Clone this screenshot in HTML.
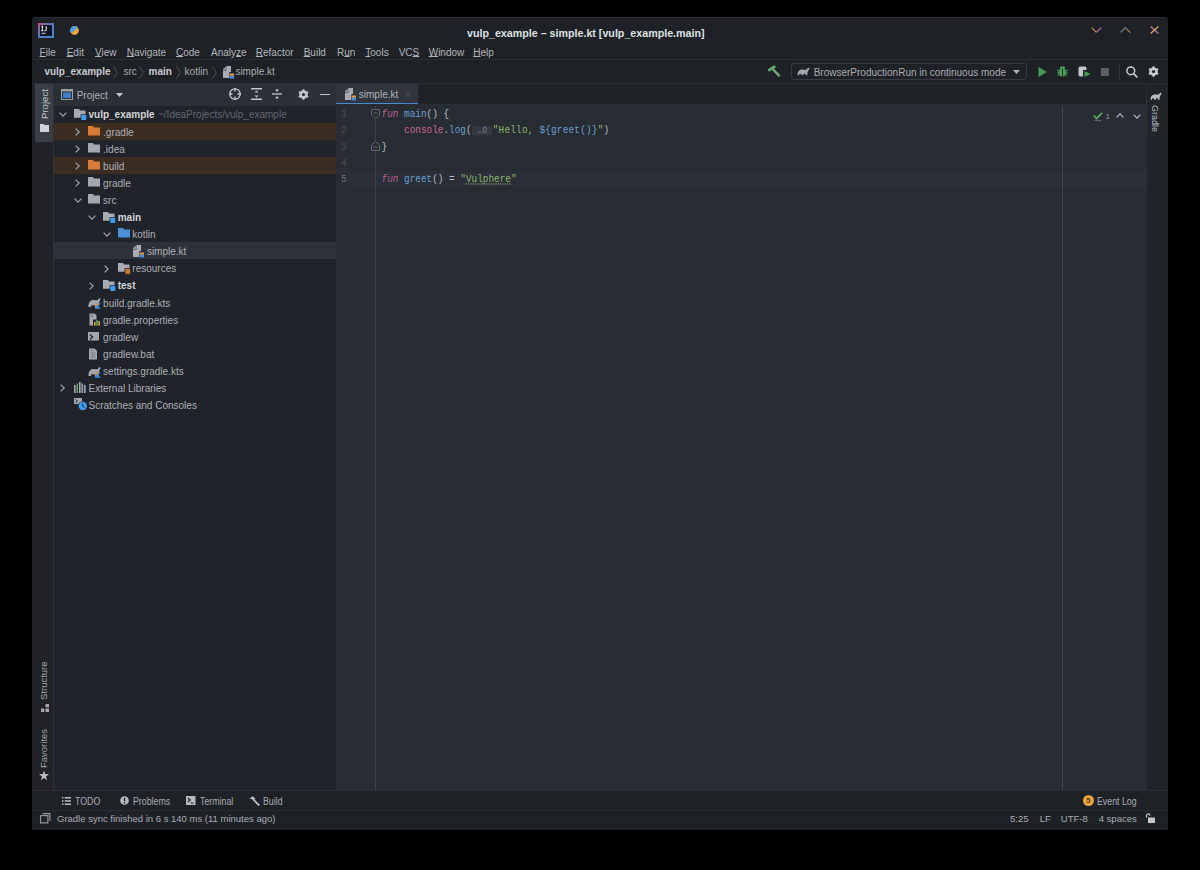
<!DOCTYPE html>
<html><head><meta charset="utf-8">
<style>
html,body{margin:0;padding:0;width:1200px;height:870px;overflow:hidden;background:#000;}
body{position:relative;font-family:"Liberation Sans",sans-serif;font-size:10px;color:#bcbec4;}
.a{position:absolute;}
.t{position:absolute;white-space:nowrap;line-height:12px;}
#win{position:absolute;left:32px;top:17px;width:1136px;height:813px;background:#1e2126;border-radius:4px 4px 0 0;box-shadow:inset 0 1px 0 #2a2d33;overflow:hidden;}
.u{text-decoration:underline;text-underline-offset:0.4px;text-decoration-thickness:1px;}
.mono{position:absolute;white-space:pre;font-family:"Liberation Mono",monospace;font-size:9.4px;line-height:16px;color:#b8bcc2;}
svg{position:absolute;overflow:visible;}
.menu{color:#b3b5ba;top:46.8px;}
.bc{top:66.4px;color:#a9acb1;}
.tr{color:#adb0b5;}
.b{font-weight:bold;color:#d2d4d8;}
</style></head>
<body>
<div id="win"></div>

<!-- ============ TITLE BAR ============ -->
<svg style="left:38px;top:23px" width="16" height="15" viewBox="0 0 16 15">
 <defs><linearGradient id="ijg" x1="0" y1="0" x2="1" y2="1"><stop offset="0" stop-color="#c8457a"/><stop offset="0.4" stop-color="#5a78c0"/><stop offset="1" stop-color="#4a86c8"/></linearGradient></defs>
 <rect x="0" y="0" width="16" height="15" fill="url(#ijg)"/>
 <rect x="2" y="2" width="12" height="11" fill="#0f1422"/>
 <path d="M3.3 3.3 H5.3 M4.3 3.3 V7.6 M3.3 7.6 H5.3 M8.2 3.3 V6.8 Q8.2 7.7 7.2 7.7 H6.3" stroke="#ececec" stroke-width="1.1" fill="none"/>
 <rect x="3.5" y="9.8" width="4" height="1" fill="#d0d0d0"/>
</svg>
<svg style="left:70.3px;top:25.5px" width="9" height="9" viewBox="0 0 9 9">
 <circle cx="4.5" cy="4.5" r="4.4" fill="#eea53a"/>
 <path d="M1.39 7.61 A4.4 4.4 0 0 1 7.61 1.39 Z" fill="#4b9fe2"/>
</svg>
<div class="t" id="title" style="left:467px;top:26.9px;font-weight:bold;font-size:10.7px;color:#dfe1e5;">vulp_example – simple.kt [vulp_example.main]</div>
<!-- window controls -->
<svg style="left:1091px;top:27px" width="11" height="6" viewBox="0 0 11 6"><path d="M0.6 0.6 L5.3 5.3" stroke="#c88a55" stroke-width="1.2" fill="none"/><path d="M5.3 5.3 L10.4 0.6" stroke="#c06fa8" stroke-width="1.2" fill="none"/></svg>
<svg style="left:1120px;top:26.5px" width="11" height="6" viewBox="0 0 11 6"><path d="M0.6 5.4 L5.3 0.7 L8 3.4" stroke="#7d8087" stroke-width="1.2" fill="none"/><path d="M8 3.4 L10.4 5.6" stroke="#c88a55" stroke-width="1.2" fill="none"/></svg>
<svg style="left:1149.5px;top:26px" width="9" height="8" viewBox="0 0 9 8"><path d="M0.6 0.6 L8.4 7.6" stroke="#c07aa0" stroke-width="1.3" fill="none"/><path d="M8.4 0.6 L0.6 7.6" stroke="#e3a76a" stroke-width="1.3" fill="none"/></svg>

<!-- ============ MENU ============ -->
<div class="t menu" style="left:39.6px"><span class="u">F</span>ile</div>
<div class="t menu" style="left:66.7px"><span class="u">E</span>dit</div>
<div class="t menu" style="left:95px"><span class="u">V</span>iew</div>
<div class="t menu" style="left:126.7px"><span class="u">N</span>avigate</div>
<div class="t menu" style="left:176px"><span class="u">C</span>ode</div>
<div class="t menu" style="left:211px">Analy<span class="u">z</span>e</div>
<div class="t menu" style="left:255.8px"><span class="u">R</span>efactor</div>
<div class="t menu" style="left:303.7px"><span class="u">B</span>uild</div>
<div class="t menu" style="left:337px">R<span class="u">u</span>n</div>
<div class="t menu" style="left:365.3px"><span class="u">T</span>ools</div>
<div class="t menu" style="left:398.7px">VC<span class="u">S</span></div>
<div class="t menu" style="left:428.7px"><span class="u">W</span>indow</div>
<div class="t menu" style="left:473.3px"><span class="u">H</span>elp</div>

<!-- separators -->
<div class="a" style="left:32px;top:59px;width:1136px;height:1px;background:#2a2d33;"></div>
<div class="a" style="left:32px;top:83px;width:1136px;height:1px;background:#2a2d33;"></div>

<!-- ============ NAVBAR ============ -->
<div class="t bc b" style="left:44.4px;color:#c9cbcf">vulp_example</div>
<svg style="left:113px;top:66px" width="5" height="13" viewBox="0 0 5 13"><path d="M0.5 0.5 L4.3 6.5 L0.5 12.5" stroke="#4d5057" stroke-width="1" fill="none"/></svg>
<div class="t bc" style="left:123.5px">src</div>
<svg style="left:139px;top:66px" width="5" height="13" viewBox="0 0 5 13"><path d="M0.5 0.5 L4.3 6.5 L0.5 12.5" stroke="#4d5057" stroke-width="1" fill="none"/></svg>
<div class="t bc b" style="left:148.5px;color:#c9cbcf">main</div>
<svg style="left:175.5px;top:66px" width="5" height="13" viewBox="0 0 5 13"><path d="M0.5 0.5 L4.3 6.5 L0.5 12.5" stroke="#4d5057" stroke-width="1" fill="none"/></svg>
<div class="t bc" style="left:184.6px">kotlin</div>
<svg style="left:212px;top:66px" width="5" height="13" viewBox="0 0 5 13"><path d="M0.5 0.5 L4.3 6.5 L0.5 12.5" stroke="#4d5057" stroke-width="1" fill="none"/></svg>
<svg style="left:221.5px;top:65px" width="12" height="14" viewBox="0 0 12 14"><path d="M4.5 1 H9 V7 H4.5 Z" fill="#a9adb3"/><path d="M1 5 H4.5 L4.5 1 L1 4 Z" fill="#8f939a"/><path d="M1 5.5 H7.5 V13 H1 Z" fill="#a9adb3"/><rect x="7" y="8" width="5.5" height="6" fill="#283040"/><path d="M7.5 8.5 H12 V10.8 H7.5 Z" fill="#e49a4a"/><path d="M7.5 10.8 H12 V13.5 H7.5 Z" fill="#4a8fd8"/></svg>
<div class="t bc" style="left:235.4px">simple.kt</div>

<!-- ============ RIGHT TOOLBAR ============ -->
<svg style="left:767px;top:65px" width="14" height="12" viewBox="0 0 14 12"><path d="M1.2 5.6 L8.2 1.2" stroke="#62a86a" stroke-width="2.8" fill="none"/><path d="M5.2 3.6 L12.6 11.2" stroke="#6fa777" stroke-width="2.4" fill="none"/></svg>
<div class="a" style="left:790.5px;top:63px;width:234px;height:15px;border:1px solid #393c43;border-radius:3px;"></div>
<svg style="left:797px;top:66.5px" width="13" height="9" viewBox="0 0 13.5 9"><path d="M0.6 8.5 C0.4 5 2 2.6 5 2.4 C7 2.3 8.2 3 9.3 2.6 C10.3 2.2 10.8 1 11.6 0.6 C12.6 0.2 13.2 1 12.8 2 C12.3 3.2 11.3 4.3 10.8 6 L10.8 8.5 L9.2 8.5 L8.8 6.8 L6.8 7.1 L6.4 8.5 L4.8 8.5 L4.5 7.1 L2.6 6.8 L2.2 8.5 Z" fill="#a4a8ae"/></svg>
<div class="t" style="left:813.7px;top:67.3px;color:#a9acb1">BrowserProductionRun in continuous mode</div>
<svg style="left:1012.5px;top:70px" width="7" height="4" viewBox="0 0 7 4"><path d="M0 0 H7 L3.5 4 Z" fill="#b0b3b8"/></svg>
<svg style="left:1038px;top:66.8px" width="9" height="10" viewBox="0 0 9 10"><path d="M0.5 0 L8.8 5 L0.5 10 Z" fill="#499c54"/></svg>
<svg style="left:1057px;top:66px" width="11" height="11" viewBox="0 0 11 11"><ellipse cx="5.5" cy="6.5" rx="4" ry="4.3" fill="#499c54"/><rect x="3" y="0.5" width="5" height="2.5" rx="1" fill="#499c54"/><path d="M0 4 L2 5 M11 4 L9 5 M0 7 H2 M11 7 H9 M0.5 10 L2 9 M10.5 10 L9 9" stroke="#499c54" stroke-width="1"/><path d="M5.5 3 V11" stroke="#1e2025" stroke-width="0.8"/></svg>
<svg style="left:1078px;top:66px" width="13" height="11" viewBox="0 0 13 11"><path d="M5 0.5 H2 C1 0.5 0.5 1.5 0.5 2.5 V8.5 C0.5 9.5 1 10.5 2 10.5 H5 Z" fill="#c4c7cc"/><path d="M5 0.5 H7 C8 0.5 8.5 1.5 8.5 2.5 V4 H5 Z" fill="#c4c7cc"/><path d="M6.5 5 L12.5 8 L6.5 11 Z" fill="#499c54"/></svg>
<div class="a" style="left:1101px;top:67.6px;width:8px;height:8.3px;background:#5a5d62;"></div>
<div class="a" style="left:1118.5px;top:64px;width:1px;height:16px;background:#2f3238;"></div>
<svg style="left:1126px;top:65.5px" width="12" height="12" viewBox="0 0 12 12"><circle cx="4.8" cy="4.8" r="3.9" stroke="#c7cacf" stroke-width="1.5" fill="none"/><path d="M7.6 7.6 L11.3 11.3" stroke="#c7cacf" stroke-width="1.7"/></svg>
<svg class="gear" style="left:1147.5px;top:66px" width="11" height="11" viewBox="0 0 12 12"><path d="M4.78 1.46 L5.14 0.16 L6.86 0.16 L7.22 1.46 L9.32 2.68 L10.62 2.34 L11.49 3.83 L10.54 4.78 L10.54 7.22 L11.49 8.17 L10.62 9.66 L9.32 9.32 L7.22 10.54 L6.86 11.84 L5.14 11.84 L4.78 10.54 L2.68 9.32 L1.38 9.66 L0.51 8.17 L1.46 7.22 L1.46 4.78 L0.51 3.83 L1.38 2.34 L2.68 2.68 Z" fill="#c7cacf"/><circle cx="6" cy="6" r="1.7" fill="#1e2126"/></svg>

<!-- ============ LEFT STRIP ============ -->
<div class="a" style="left:32px;top:84px;width:21px;height:706px;background:#202227;"></div>
<div class="a" style="left:53px;top:84px;width:1px;height:706px;background:#2f3237;"></div>
<div class="a" style="left:35px;top:83.5px;width:18px;height:58px;background:#3a3e45;"></div>
<div class="t" style="left:38.6px;top:119px;transform:rotate(-90deg);transform-origin:0 0;color:#c3c6cb;font-size:9.6px">Project</div>
<svg style="left:39.8px;top:124.2px" width="9" height="8" viewBox="0 0 9 8"><path d="M0 0 H3.5 L4.5 1 H9 V8 H0 Z" fill="#d0d3d8"/></svg>
<div class="t" style="left:38.2px;top:700px;transform:rotate(-90deg);transform-origin:0 0;color:#a3a6ab;font-size:9.5px">Structure</div>
<svg style="left:40.5px;top:704px" width="8" height="8" viewBox="0 0 8 8"><rect x="0" y="4.5" width="3.3" height="3.5" fill="#a3a6ab"/><rect x="4.5" y="4.5" width="3.5" height="3.5" fill="#a3a6ab"/><rect x="4.5" y="0" width="3.5" height="3.3" fill="#a3a6ab"/></svg>
<div class="t" style="left:38.2px;top:768px;transform:rotate(-90deg);transform-origin:0 0;color:#a3a6ab;font-size:9.5px">Favorites</div>
<svg style="left:39.3px;top:770px" width="10" height="11" viewBox="0 0 10 10"><path d="M5 0 L6.2 3.6 L10 3.7 L7 6 L8.1 9.8 L5 7.6 L1.9 9.8 L3 6 L0 3.7 L3.8 3.6 Z" fill="#b8bbc0"/></svg>

<!-- ============ PROJECT PANEL ============ -->
<div class="a" style="left:54px;top:84px;width:282px;height:22px;background:#2b2f36;"></div>
<div class="a" style="left:54px;top:106px;width:282px;height:684px;background:#20232a;"></div>
<svg style="left:60.8px;top:89px" width="12" height="11" viewBox="0 0 12 11"><rect x="0.5" y="0.5" width="11" height="10" fill="none" stroke="#9da1a7" stroke-width="1"/><rect x="0.5" y="0.5" width="11" height="2" fill="#9da1a7"/><rect x="2" y="3.5" width="8" height="5.5" fill="#3f7fc7"/></svg>
<div class="t" style="left:76.7px;top:90px;color:#aeb1b6">Project</div>
<svg style="left:116px;top:93.3px" width="7" height="4" viewBox="0 0 7 4"><path d="M0 0 H7 L3.5 4 Z" fill="#c3c6cb"/></svg>
<!-- header icons -->
<svg style="left:228.5px;top:88px" width="12" height="12" viewBox="0 0 12 12"><circle cx="6" cy="6" r="5.2" stroke="#c3c6cb" stroke-width="1.3" fill="none"/><path d="M6 0 V3.5 M6 8.5 V12 M0 6 H3.5 M8.5 6 H12" stroke="#c3c6cb" stroke-width="1.3"/></svg>
<svg style="left:250.5px;top:88px" width="11" height="12" viewBox="0 0 11 12"><path d="M0 0.8 H11 M0 11.2 H11" stroke="#c3c6cb" stroke-width="1.6"/><path d="M3.5 4.5 L5.5 2.5 L7.5 4.5 Z M3.5 7.5 L5.5 9.5 L7.5 7.5 Z" fill="#c3c6cb"/></svg>
<svg style="left:272px;top:89px" width="10" height="10" viewBox="0 0 10 10"><path d="M0 5 H10" stroke="#c3c6cb" stroke-width="1.3"/><path d="M3 0.5 L5 3 L7 0.5 Z M3 9.5 L5 7 L7 9.5 Z" fill="#c3c6cb"/></svg>
<svg class="gear" style="left:297.5px;top:88.5px" width="11" height="11" viewBox="0 0 12 12"><path d="M4.78 1.46 L5.14 0.16 L6.86 0.16 L7.22 1.46 L9.32 2.68 L10.62 2.34 L11.49 3.83 L10.54 4.78 L10.54 7.22 L11.49 8.17 L10.62 9.66 L9.32 9.32 L7.22 10.54 L6.86 11.84 L5.14 11.84 L4.78 10.54 L2.68 9.32 L1.38 9.66 L0.51 8.17 L1.46 7.22 L1.46 4.78 L0.51 3.83 L1.38 2.34 L2.68 2.68 Z" fill="#c3c6cb"/><circle cx="6" cy="6" r="1.7" fill="#2b2f36"/></svg>
<div class="a" style="left:320px;top:93.5px;width:10px;height:1.5px;background:#c3c6cb;"></div>

<svg style="left:59.0px;top:112.2px" width="8" height="5" viewBox="0 0 8 5"><path d="M0.6 0.6 L4 4.2 L7.4 0.6" stroke="#a2a5aa" stroke-width="1.2" fill="none"/></svg>
<svg style="left:73.8px;top:109.0px" width="13" height="12" viewBox="0 0 13 12"><path d="M0 0 H5 L6 1.5 H11.5 V8.7 H0 Z" fill="#a8acb2"/><rect x="6.6" y="5.2" width="6" height="6" fill="#20232a"/><rect x="7.3" y="5.8" width="5" height="5.2" fill="#3d9bf0"/></svg>
<div class="t b" style="left:88.5px;top:109.4px">vulp_example</div>
<div class="t" style="left:158px;top:109.4px;color:#62666d">~/IdeaProjects/vulp_example</div>
<div class="a" style="left:54px;top:122.7px;width:282px;height:17.1px;background:#3c2d22"></div>
<svg style="left:74.8px;top:127.9px" width="5" height="8" viewBox="0 0 5 8"><path d="M0.6 0.6 L4.2 4 L0.6 7.4" stroke="#a2a5aa" stroke-width="1.2" fill="none"/></svg>
<svg style="left:88.4px;top:125.5px" width="12" height="10" viewBox="0 0 12 10"><path d="M0 0 H5 L6 1.5 H12 V9.5 H0 Z" fill="#d67c36"/></svg>
<div class="t tr" style="left:103.1px;top:126.5px">.gradle</div>
<svg style="left:74.8px;top:145.0px" width="5" height="8" viewBox="0 0 5 8"><path d="M0.6 0.6 L4.2 4 L0.6 7.4" stroke="#a2a5aa" stroke-width="1.2" fill="none"/></svg>
<svg style="left:88.4px;top:142.6px" width="12" height="10" viewBox="0 0 12 10"><path d="M0 0 H5 L6 1.5 H12 V9.5 H0 Z" fill="#a4a8ae"/></svg>
<div class="t tr" style="left:103.1px;top:143.6px">.idea</div>
<div class="a" style="left:54px;top:156.9px;width:282px;height:17.1px;background:#3c2d22"></div>
<svg style="left:74.8px;top:162.1px" width="5" height="8" viewBox="0 0 5 8"><path d="M0.6 0.6 L4.2 4 L0.6 7.4" stroke="#a2a5aa" stroke-width="1.2" fill="none"/></svg>
<svg style="left:88.4px;top:159.7px" width="12" height="10" viewBox="0 0 12 10"><path d="M0 0 H5 L6 1.5 H12 V9.5 H0 Z" fill="#d67c36"/></svg>
<div class="t tr" style="left:103.1px;top:160.7px">build</div>
<svg style="left:74.8px;top:179.2px" width="5" height="8" viewBox="0 0 5 8"><path d="M0.6 0.6 L4.2 4 L0.6 7.4" stroke="#a2a5aa" stroke-width="1.2" fill="none"/></svg>
<svg style="left:88.4px;top:176.8px" width="12" height="10" viewBox="0 0 12 10"><path d="M0 0 H5 L6 1.5 H12 V9.5 H0 Z" fill="#a4a8ae"/></svg>
<div class="t tr" style="left:103.1px;top:177.8px">gradle</div>
<svg style="left:73.6px;top:197.7px" width="8" height="5" viewBox="0 0 8 5"><path d="M0.6 0.6 L4 4.2 L7.4 0.6" stroke="#a2a5aa" stroke-width="1.2" fill="none"/></svg>
<svg style="left:88.4px;top:193.9px" width="12" height="10" viewBox="0 0 12 10"><path d="M0 0 H5 L6 1.5 H12 V9.5 H0 Z" fill="#a4a8ae"/></svg>
<div class="t tr" style="left:103.1px;top:194.9px">src</div>
<svg style="left:88.2px;top:214.8px" width="8" height="5" viewBox="0 0 8 5"><path d="M0.6 0.6 L4 4.2 L7.4 0.6" stroke="#a2a5aa" stroke-width="1.2" fill="none"/></svg>
<svg style="left:103.0px;top:211.6px" width="13" height="12" viewBox="0 0 13 12"><path d="M0 0 H5 L6 1.5 H11.5 V8.7 H0 Z" fill="#a8acb2"/><rect x="6.6" y="5.2" width="6" height="6" fill="#20232a"/><rect x="7.3" y="5.8" width="5" height="5.2" fill="#3d9bf0"/></svg>
<div class="t b" style="left:117.7px;top:212.0px">main</div>
<svg style="left:102.8px;top:231.9px" width="8" height="5" viewBox="0 0 8 5"><path d="M0.6 0.6 L4 4.2 L7.4 0.6" stroke="#a2a5aa" stroke-width="1.2" fill="none"/></svg>
<svg style="left:117.6px;top:228.1px" width="12" height="10" viewBox="0 0 12 10"><path d="M0 0 H5 L6 1.5 H12 V9.5 H0 Z" fill="#4a90d6"/></svg>
<div class="t tr" style="left:132.3px;top:229.1px">kotlin</div>
<div class="a" style="left:54px;top:242.4px;width:282px;height:17.1px;background:#2d3139"></div>
<svg style="left:132.2px;top:244.0px" width="12" height="14" viewBox="0 0 12 14"><path d="M4.5 1 H9 V7 H4.5 Z" fill="#a9adb3"/><path d="M1 5 H4.5 L4.5 1 L1 4 Z" fill="#8f939a"/><path d="M1 5.5 H7.5 V13 H1 Z" fill="#a9adb3"/><rect x="7" y="8" width="5.5" height="6" fill="#283040"/><path d="M7.5 8.5 H12 V10.8 H7.5 Z" fill="#e49a4a"/><path d="M7.5 10.8 H12 V13.5 H7.5 Z" fill="#4a8fd8"/></svg>
<div class="t tr" style="left:146.9px;top:246.2px">simple.kt</div>
<svg style="left:104.0px;top:264.7px" width="5" height="8" viewBox="0 0 5 8"><path d="M0.6 0.6 L4.2 4 L0.6 7.4" stroke="#a2a5aa" stroke-width="1.2" fill="none"/></svg>
<svg style="left:117.6px;top:262.9px" width="13" height="12" viewBox="0 0 13 12"><path d="M0 0 H5 L6 1.5 H11.5 V8.7 H0 Z" fill="#a8acb2"/><rect x="6.6" y="5" width="6" height="6.5" fill="#20232a"/><rect x="7.3" y="5.6" width="5" height="5.6" fill="#b06a2c"/><path d="M8 7.3 H11.6 M8 9 H11.6" stroke="#e0a060" stroke-width="0.7"/></svg>
<div class="t tr" style="left:132.3px;top:263.3px">resources</div>
<svg style="left:89.4px;top:281.8px" width="5" height="8" viewBox="0 0 5 8"><path d="M0.6 0.6 L4.2 4 L0.6 7.4" stroke="#a2a5aa" stroke-width="1.2" fill="none"/></svg>
<svg style="left:103.0px;top:280.0px" width="13" height="12" viewBox="0 0 13 12"><path d="M0 0 H5 L6 1.5 H11.5 V8.7 H0 Z" fill="#a8acb2"/><rect x="6.6" y="5.2" width="6" height="6" fill="#20232a"/><rect x="7.3" y="5.8" width="5" height="5.2" fill="#3d9bf0"/></svg>
<div class="t b" style="left:117.7px;top:280.4px">test</div>
<svg style="left:88.4px;top:297.3px" width="14" height="12" viewBox="0 0 14 12"><path d="M0.5 10 C0.3 6.5 1.5 3.5 5 3 C7.5 2.7 9 4 10 2.7 C10.5 1.7 11 1 12 1.3 C12.8 1.7 12.5 3 11.8 3.7 C11 4.5 11.5 6.5 10.5 10 H9 L8.5 8 C7 8.5 5 8.5 3.5 8 L3 10 Z" fill="#a4a8ae"/><path d="M7 6.5 L13 6.5 L10 9 L13 11.8 L7 11.8 Z" fill="#3a8ce0"/><path d="M7 6.5 L11 6.5 L7 10.2 Z" fill="#ef8d3a"/></svg>
<div class="t tr" style="left:103.1px;top:297.5px">build.gradle.kts</div>
<svg style="left:88.4px;top:313.3px" width="12" height="13" viewBox="0 0 12 13"><path d="M1.5 0.5 H6.5 L8.5 2.5 V6.5 H5 V12.5 H1.5 Z" fill="#a4a8ae"/><path d="M3 1.8 V4.2 M4.5 1.8 V4.2" stroke="#6b6f76" stroke-width="0.8"/><rect x="6" y="9" width="1.6" height="3.6" fill="#e0a040"/><rect x="8.2" y="7" width="1.6" height="5.6" fill="#59a869"/><rect x="10.4" y="8" width="1.6" height="4.6" fill="#e0a040"/></svg>
<div class="t tr" style="left:103.1px;top:314.6px">gradle.properties</div>
<svg style="left:88.4px;top:332.1px" width="11" height="9" viewBox="0 0 11 9"><rect x="0" y="0" width="11" height="8.5" fill="#a4a8ae"/><path d="M2 2.5 L4.5 5 L2 7.5" stroke="#20232a" stroke-width="1.3" fill="none"/></svg>
<div class="t tr" style="left:103.1px;top:331.7px">gradlew</div>
<svg style="left:88.4px;top:347.7px" width="10" height="12" viewBox="0 0 10 12"><path d="M1 0.5 H6.5 L9 3 V11.5 H1 Z" fill="#a4a8ae"/><path d="M2.5 5 H7.5 M2.5 7 H7.5 M2.5 9 H7.5 M2.5 2.5 H5" stroke="#6b6f76" stroke-width="0.8"/></svg>
<div class="t tr" style="left:103.1px;top:348.8px">gradlew.bat</div>
<svg style="left:88.4px;top:365.7px" width="14" height="12" viewBox="0 0 14 12"><path d="M0.5 10 C0.3 6.5 1.5 3.5 5 3 C7.5 2.7 9 4 10 2.7 C10.5 1.7 11 1 12 1.3 C12.8 1.7 12.5 3 11.8 3.7 C11 4.5 11.5 6.5 10.5 10 H9 L8.5 8 C7 8.5 5 8.5 3.5 8 L3 10 Z" fill="#a4a8ae"/><path d="M7 6.5 L13 6.5 L10 9 L13 11.8 L7 11.8 Z" fill="#3a8ce0"/><path d="M7 6.5 L11 6.5 L7 10.2 Z" fill="#ef8d3a"/></svg>
<div class="t tr" style="left:103.1px;top:365.9px">settings.gradle.kts</div>
<svg style="left:60.2px;top:384.4px" width="5" height="8" viewBox="0 0 5 8"><path d="M0.6 0.6 L4.2 4 L0.6 7.4" stroke="#a2a5aa" stroke-width="1.2" fill="none"/></svg>
<svg style="left:73.8px;top:381.8px" width="12" height="11" viewBox="0 0 12 11"><rect x="0" y="3" width="1.6" height="8" fill="#a4a8ae"/><rect x="2.5" y="1.5" width="1.6" height="9.5" fill="#59a869"/><rect x="5" y="0" width="1.6" height="11" fill="#a4a8ae"/><rect x="7.5" y="1.5" width="1.6" height="9.5" fill="#a4a8ae"/><rect x="10" y="3" width="1.6" height="8" fill="#a4a8ae"/></svg>
<div class="t tr" style="left:88.5px;top:383.0px">External Libraries</div>
<svg style="left:73.8px;top:397.5px" width="14" height="13" viewBox="0 0 14 13"><path d="M0 0 H8 V6 H0 Z" fill="#a4a8ae"/><path d="M1.5 1.5 L3.5 3 L1.5 4.5" stroke="#20232a" stroke-width="0.9" fill="none"/><circle cx="8.8" cy="8" r="4.8" fill="#20232a"/><circle cx="8.8" cy="8" r="4.2" fill="#3d9bf0"/><path d="M8.8 5.5 V8.3 L10.5 9.5" stroke="#20232a" stroke-width="0.9" fill="none"/></svg>
<div class="t tr" style="left:88.5px;top:400.1px">Scratches and Consoles</div>
<!-- ============ EDITOR ============ -->
<div class="a" style="left:336px;top:84px;width:811px;height:20px;background:#1f2227;"></div>
<div class="a" style="left:336px;top:84px;width:82px;height:19px;background:#31353c;"></div>
<div class="a" style="left:336px;top:103px;width:82px;height:2.6px;background:#4a8bcf;"></div>
<svg style="left:343.5px;top:87px" width="12" height="14" viewBox="0 0 12 14"><path d="M4.5 1 H9 V7 H4.5 Z" fill="#a9adb3"/><path d="M1 5 H4.5 L4.5 1 L1 4 Z" fill="#8f939a"/><path d="M1 5.5 H7.5 V13 H1 Z" fill="#a9adb3"/><rect x="7" y="8" width="5.5" height="6" fill="#283040"/><path d="M7.5 8.5 H12 V10.8 H7.5 Z" fill="#e49a4a"/><path d="M7.5 10.8 H12 V13.5 H7.5 Z" fill="#4a8fd8"/></svg>
<div class="t" style="left:358.8px;top:89px;color:#aeb1b6">simple.kt</div>
<svg style="left:405px;top:91.5px" width="6" height="6" viewBox="0 0 6 6"><path d="M0.5 0.5 L5.5 5.5 M5.5 0.5 L0.5 5.5" stroke="#4f5259" stroke-width="1"/></svg>

<div class="a" style="left:336px;top:104px;width:811px;height:686px;background:#282c33;"></div>
<!-- current line highlight -->
<div class="a" style="left:348px;top:170.6px;width:798px;height:16.2px;background:#2b2f37;"></div>
<!-- line numbers -->
<div class="mono" style="left:341px;top:106.6px;color:#484c53;line-height:12.96px;transform:scaleY(1.25);transform-origin:0 0">1
2
3
4
<span style="color:#6d7178">5</span></div>
<!-- fold line -->
<div class="a" style="left:375px;top:106px;width:1px;height:684px;background:#3b3f46;"></div>
<svg style="left:371px;top:108.5px" width="9" height="10" viewBox="0 0 9 10"><path d="M0.5 0.5 H8.5 V6 L4.5 9.5 L0.5 6 Z" fill="#282c33" stroke="#62666d" stroke-width="1"/><path d="M2.5 4 H6.5" stroke="#62666d" stroke-width="1"/></svg>
<svg style="left:371px;top:140.5px" width="9" height="10" viewBox="0 0 9 10"><path d="M0.5 9.5 H8.5 V4 L4.5 0.5 L0.5 4 Z" fill="#282c33" stroke="#62666d" stroke-width="1"/><path d="M2.5 6 H6.5" stroke="#62666d" stroke-width="1"/></svg>
<!-- code -->
<div class="mono" style="left:381.5px;top:106.6px;line-height:12.96px;transform:scaleY(1.25);transform-origin:0 0"><i style="color:#b8638f">fun</i> <span style="color:#6a9fd4">main</span>() {
    <span style="color:#c96a8a">console</span>.<span style="color:#6a9fd4">log</span>(<span style="display:inline-block;width:19.5px;height:8px;vertical-align:-0.2px;background:#353940;border-radius:2px;margin:0 0.8px 0 0.9px;color:#80848b;font-size:8px;line-height:8px;text-align:center">…o</span><span style="letter-spacing:0.2px"><span style="color:#8db56e">"Hello, </span><span style="color:#6a9fd4">${greet()}</span><span style="color:#8db56e">"</span>)</span>
}

<i style="color:#b8638f">fun</i> <span style="color:#6a9fd4">greet</span>() = <span style="color:#8db56e">"Vulphere"</span></div>
<svg style="left:465px;top:182.6px" width="46" height="2" viewBox="0 0 46 2"><path d="M0 1.6 L1.15 0.4 L2.30 1.6 L3.45 0.4 L4.60 1.6 L5.75 0.4 L6.90 1.6 L8.05 0.4 L9.20 1.6 L10.35 0.4 L11.50 1.6 L12.65 0.4 L13.80 1.6 L14.95 0.4 L16.10 1.6 L17.25 0.4 L18.40 1.6 L19.55 0.4 L20.70 1.6 L21.85 0.4 L23.00 1.6 L24.15 0.4 L25.30 1.6 L26.45 0.4 L27.60 1.6 L28.75 0.4 L29.90 1.6 L31.05 0.4 L32.20 1.6 L33.35 0.4 L34.50 1.6 L35.65 0.4 L36.80 1.6 L37.95 0.4 L39.10 1.6 L40.25 0.4 L41.40 1.6 L42.55 0.4 L43.70 1.6 L44.85 0.4 L46.00 1.6" stroke="#7f9270" stroke-width="0.8" fill="none"/></svg>
<!-- right margin -->
<div class="a" style="left:1062px;top:106px;width:1px;height:684px;background:#41454c;"></div>
<!-- inspection widget -->
<svg style="left:1092.5px;top:112px" width="10" height="10" viewBox="0 0 10 10"><path d="M0.8 3.5 L3.5 6.5 L9.2 0.8" stroke="#59a869" stroke-width="1.8" fill="none"/><path d="M1 9 L2.5 8 L4 9 L5.5 8 L7 9 L8.5 8" stroke="#8c9096" stroke-width="0.7" fill="none"/></svg>
<div class="t" style="left:1105.5px;top:110.5px;font-size:8px;color:#9a9ea4">1</div>
<svg style="left:1116px;top:113.2px" width="8" height="5" viewBox="0 0 8 5"><path d="M0.6 4.4 L4 0.8 L7.4 4.4" stroke="#b8bbc0" stroke-width="1.2" fill="none"/></svg>
<svg style="left:1132.5px;top:113.5px" width="8" height="5" viewBox="0 0 8 5"><path d="M0.6 0.6 L4 4.2 L7.4 0.6" stroke="#b8bbc0" stroke-width="1.2" fill="none"/></svg>

<!-- ============ RIGHT STRIP ============ -->
<div class="a" style="left:1147px;top:84px;width:21px;height:706px;background:#202328;"></div>
<div class="a" style="left:1146px;top:84px;width:1px;height:706px;background:#2c2f35;"></div>
<svg style="left:1149.5px;top:91.5px" width="12" height="8.5" viewBox="0 0 13.5 9"><path d="M0.6 8.5 C0.4 5 2 2.6 5 2.4 C7 2.3 8.2 3 9.3 2.6 C10.3 2.2 10.8 1 11.6 0.6 C12.6 0.2 13.2 1 12.8 2 C12.3 3.2 11.3 4.3 10.8 6 L10.8 8.5 L9.2 8.5 L8.8 6.8 L6.8 7.1 L6.4 8.5 L4.8 8.5 L4.5 7.1 L2.6 6.8 L2.2 8.5 Z" fill="#b8bbc0"/></svg>
<div class="t" style="left:1161px;top:104.5px;transform:rotate(90deg);transform-origin:0 0;color:#b8bbc0;font-size:9px">Gradle</div>

<!-- ============ BOTTOM TOOLBAR ============ -->
<div class="a" style="left:32px;top:789.5px;width:1136px;height:1px;background:#2a2d33;"></div>
<svg style="left:62px;top:796.5px" width="9" height="8" viewBox="0 0 9 8"><path d="M0 0.8 H1.5 M0 4 H1.5 M0 7.2 H1.5 M2.7 0.8 H9 M2.7 4 H9 M2.7 7.2 H9" stroke="#b8bbc0" stroke-width="1.4"/></svg>
<div class="t" style="left:75px;top:795.6px;color:#a9acb1;transform:scaleX(0.88);transform-origin:0 0">TODO</div>
<svg style="left:119.5px;top:796.3px" width="9" height="9" viewBox="0 0 9 9"><circle cx="4.5" cy="4.5" r="4.3" fill="#b8bbc0"/><rect x="3.8" y="1.8" width="1.4" height="3.4" fill="#1e2126"/><rect x="3.8" y="6" width="1.4" height="1.3" fill="#1e2126"/></svg>
<div class="t" style="left:132.8px;top:795.6px;color:#a9acb1;transform:scaleX(0.88);transform-origin:0 0">Problems</div>
<svg style="left:186.3px;top:796.3px" width="9.5" height="9" viewBox="0 0 9.5 9"><rect x="0" y="0" width="9.5" height="9" fill="#b8bbc0"/><path d="M1.8 2 L4.2 4 L1.8 6 M4.5 7 H7.5" stroke="#1e2126" stroke-width="1.1" fill="none"/></svg>
<div class="t" style="left:199.9px;top:795.6px;color:#a9acb1;transform:scaleX(0.88);transform-origin:0 0">Terminal</div>
<svg style="left:249.3px;top:795.5px" width="11" height="10" viewBox="0 0 11 10"><path d="M0.5 2.5 L3.5 0.3 L6.5 2.5 L5 4 Z" fill="#b8bbc0"/><path d="M4 3.2 L10.3 9.5" stroke="#b8bbc0" stroke-width="1.8"/></svg>
<div class="t" style="left:263.4px;top:795.6px;color:#a9acb1;transform:scaleX(0.88);transform-origin:0 0">Build</div>

<svg style="left:1083px;top:795px" width="11" height="11" viewBox="0 0 11 11"><circle cx="5.5" cy="5.5" r="5.5" fill="#eea23c"/><text x="3.3" y="8.3" font-family="Liberation Sans" font-size="7.5" font-weight="bold" fill="#5a3a10">5</text></svg>
<div class="t" style="left:1097px;top:795.6px;color:#a9acb1;transform:scaleX(0.88);transform-origin:0 0">Event Log</div>

<!-- ============ STATUS BAR ============ -->
<div class="a" style="left:32px;top:809.5px;width:1136px;height:1px;background:#2a2d33;"></div>
<svg style="left:39.5px;top:813px" width="10.5" height="10.5" viewBox="0 0 10.5 10.5"><rect x="0.6" y="2.6" width="7.3" height="7.3" fill="none" stroke="#9a9ea4" stroke-width="1.1"/><path d="M2.6 0.6 H9.9 V7.9" fill="none" stroke="#9a9ea4" stroke-width="1.1"/></svg>
<div class="t" style="left:57px;top:813px;color:#a9acb1;font-size:9.5px">Gradle sync finished in 6 s 140 ms (11 minutes ago)</div>
<div class="t" style="left:1010px;top:813px;color:#a9acb1;font-size:9.5px">5:25</div>
<div class="t" style="left:1039.7px;top:813px;color:#a9acb1;font-size:9.5px">LF</div>
<div class="t" style="left:1060.8px;top:813px;color:#a9acb1;font-size:9.5px">UTF-8</div>
<div class="t" style="left:1098.7px;top:813px;color:#a9acb1;font-size:9.5px">4 spaces</div>
<svg style="left:1145px;top:812.5px" width="10" height="10" viewBox="0 0 10 10"><path d="M1.5 4.5 V2.8 C1.5 0.3 5 0.3 5 2.8" stroke="#c3c6cb" stroke-width="1.2" fill="none"/><rect x="3" y="4.5" width="7" height="5.5" fill="#c3c6cb"/></svg>

</body></html>
